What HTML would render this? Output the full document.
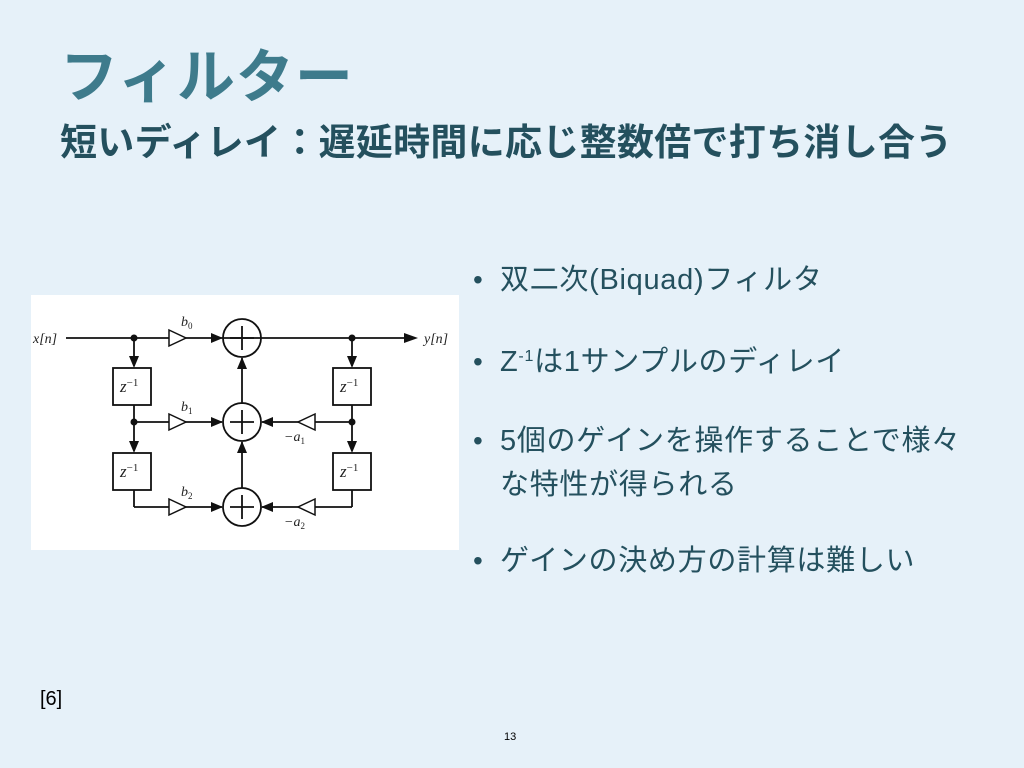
<!DOCTYPE html>
<html><head><meta charset="utf-8"><style>
body{margin:0;width:1024px;height:768px;background:#e6f1f9;position:relative;overflow:hidden;font-family:"Liberation Sans","Noto Sans CJK JP",sans-serif;}
.t{position:absolute;white-space:nowrap;}
#title{left:60px;top:30px;font-size:58px;font-weight:bold;color:#3e7b8c;letter-spacing:1px;}
#sub{left:60px;top:112px;font-size:37px;font-weight:bold;color:#24505e;letter-spacing:0.3px;}
.b{position:absolute;left:473px;font-size:29px;color:#24505e;white-space:nowrap;line-height:44px;letter-spacing:0.7px;}
.b:before{content:"•";position:absolute;left:0;font-size:28px;}
.b span.x{margin-left:27px;}
#ref{left:40px;top:688px;font-size:20px;color:#000;}
#pg{left:504px;top:731px;font-size:11px;color:#000;}
</style></head><body>
<div class="t" id="title">フィルター</div>
<div class="t" id="sub">短いディレイ：遅延時間に応じ整数倍で打ち消し合う</div>
<div class="b" style="top:258px"><span class="x">双二次(Biquad)フィルタ</span></div>
<div class="b" style="top:340px"><span class="x">Z<sup style="font-size:16px;vertical-align:10px;line-height:0">-1</sup>は1サンプルのディレイ</span></div>
<div class="b" style="top:419px"><span class="x">5個のゲインを操作することで様々</span><br><span class="x">な特性が得られる</span></div>
<div class="b" style="top:539px"><span class="x">ゲインの決め方の計算は難しい</span></div>
<div class="t" id="ref">[6]</div>
<div class="t" id="pg">13</div>
<svg style="position:absolute;left:0;top:0" width="1024" height="768">
<rect x="31" y="295" width="428" height="255" fill="#fff"/>
<g stroke="#111" stroke-width="1.8" fill="none">
<line x1="66" y1="338" x2="404" y2="338"/>
<line x1="134" y1="338" x2="134" y2="366"/><line x1="134" y1="405" x2="134" y2="451"/>
<line x1="134" y1="490" x2="134" y2="507"/><line x1="134" y1="507" x2="222" y2="507"/>
<line x1="134" y1="422" x2="222" y2="422"/>
<line x1="352" y1="338" x2="352" y2="366"/><line x1="352" y1="405" x2="352" y2="451"/>
<line x1="352" y1="490" x2="352" y2="507"/><line x1="352" y1="507" x2="262" y2="507"/>
<line x1="352" y1="422" x2="262" y2="422"/>
<line x1="242" y1="488" x2="242" y2="442"/><line x1="242" y1="404" x2="242" y2="358"/>
<rect x="113" y="368" width="38" height="37"/><rect x="113" y="453" width="38" height="37"/>
<rect x="333" y="368" width="38" height="37"/><rect x="333" y="453" width="38" height="37"/>
<circle cx="242" cy="338" r="19"/><circle cx="242" cy="422" r="19"/><circle cx="242" cy="507" r="19"/>
<path d="M230 338h24M242 326v24M230 422h24M242 410v24M230 507h24M242 495v24"/>
</g>
<g fill="#fff" stroke="#111" stroke-width="1.5">
<path d="M169 330l17 8-17 8z"/><path d="M169 414l17 8-17 8z"/><path d="M169 499l17 8-17 8z"/>
<path d="M315 414l-17 8 17 8z"/><path d="M315 499l-17 8 17 8z"/>
</g>
<g fill="#111">
<circle cx="134" cy="338" r="3.5"/><circle cx="134" cy="422" r="3.5"/><circle cx="352" cy="338" r="3.5"/><circle cx="352" cy="422" r="3.5"/>
<path d="M418 338l-14-5v10z"/>
<path d="M223 338l-12-5v10zM223 422l-12-5v10zM223 507l-12-5v10z"/>
<path d="M261 422l12-5v10zM261 507l12-5v10z"/>
<path d="M242 357l-5 12h10zM242 441l-5 12h10z"/>
<path d="M134 368l-5-12h10zM134 453l-5-12h10zM352 368l-5-12h10zM352 453l-5-12h10z"/>
</g>
<g font-family="Liberation Serif,serif" font-style="italic" font-size="14" fill="#222">
<text x="33" y="343">x[n]</text><text x="424" y="343">y[n]</text>
<text x="181" y="326">b<tspan font-size="9" dy="3" font-style="normal">0</tspan></text>
<text x="181" y="411">b<tspan font-size="9" dy="3" font-style="normal">1</tspan></text>
<text x="181" y="496">b<tspan font-size="9" dy="3" font-style="normal">2</tspan></text>
<text x="284" y="441">−a<tspan font-size="9" dy="3" font-style="normal">1</tspan></text>
<text x="284" y="526">−a<tspan font-size="9" dy="3" font-style="normal">2</tspan></text>
<g font-size="17"><text x="120" y="392">z<tspan font-size="11" dy="-6" font-style="normal">−1</tspan></text>
<text x="120" y="477">z<tspan font-size="11" dy="-6" font-style="normal">−1</tspan></text>
<text x="340" y="392">z<tspan font-size="11" dy="-6" font-style="normal">−1</tspan></text>
<text x="340" y="477">z<tspan font-size="11" dy="-6" font-style="normal">−1</tspan></text></g>
</g>
</svg>
</body></html>
